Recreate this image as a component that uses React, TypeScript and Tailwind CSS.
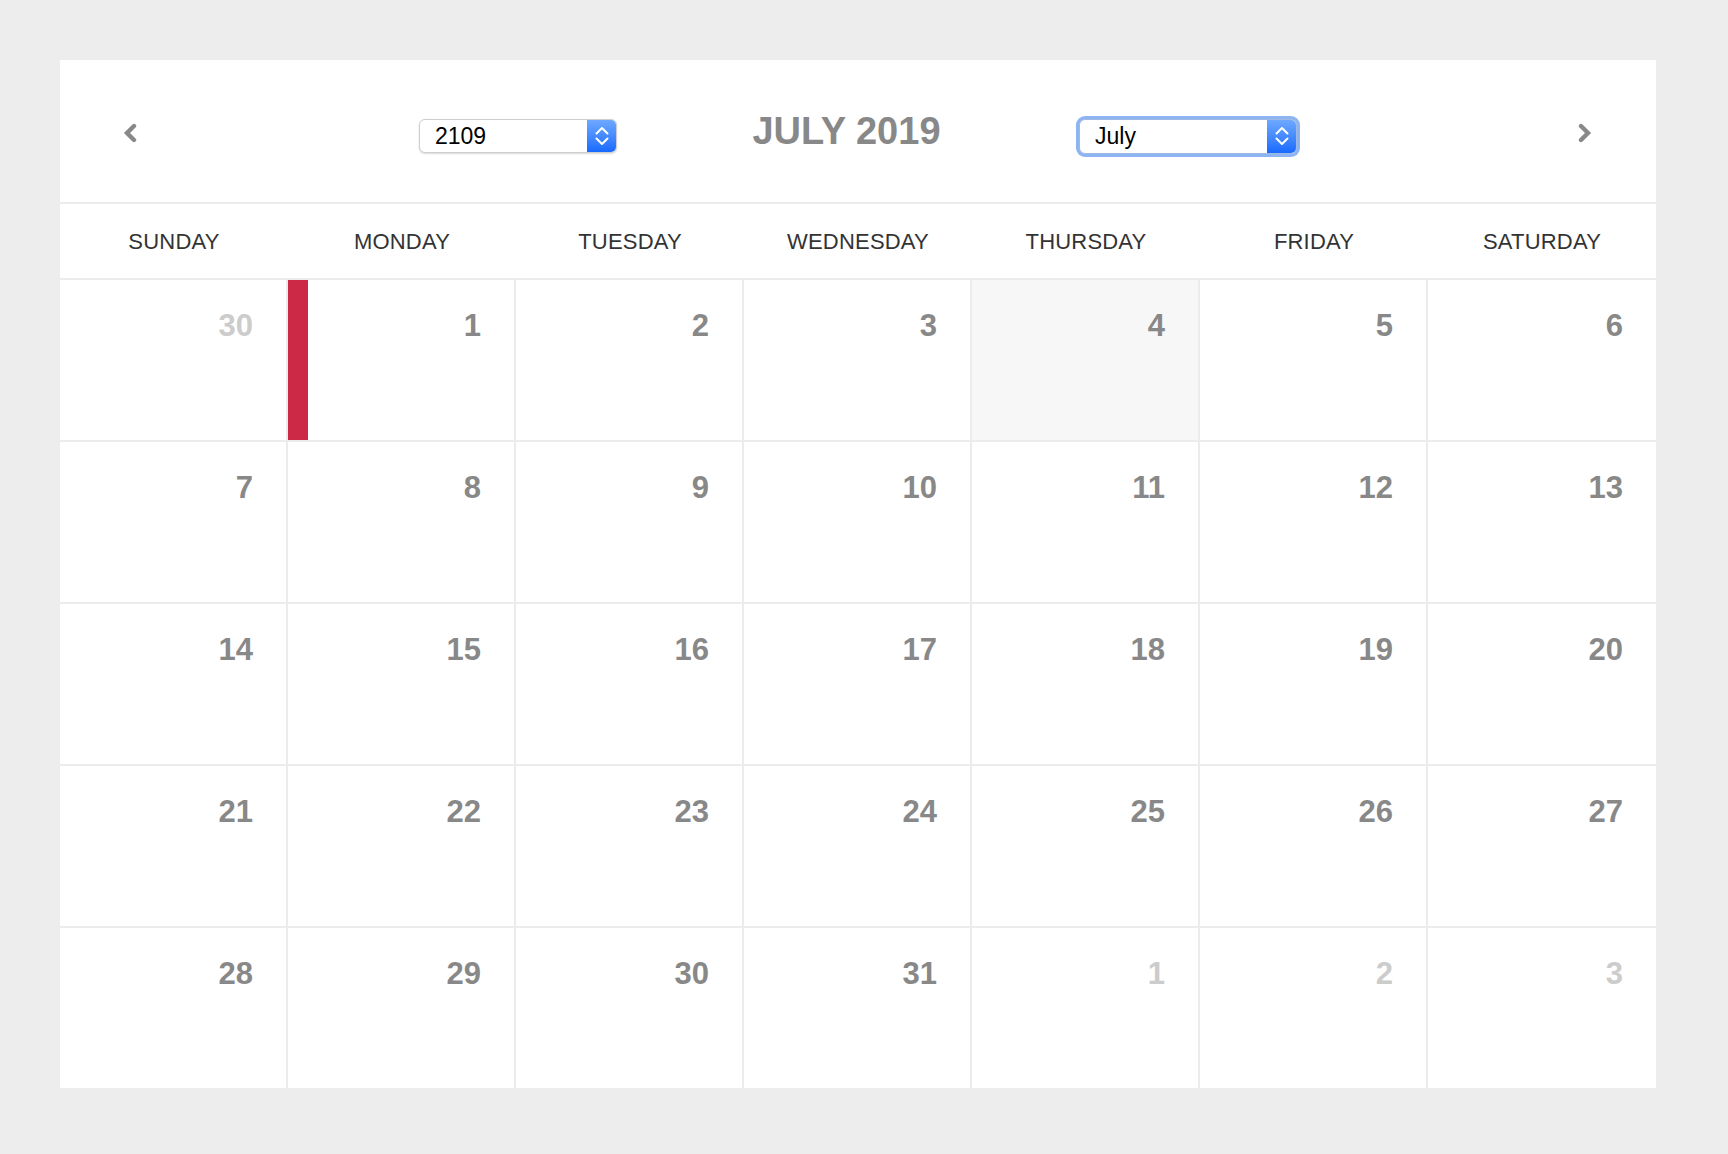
import React from 'react';

const weekdays = ['SUNDAY', 'MONDAY', 'TUESDAY', 'WEDNESDAY', 'THURSDAY', 'FRIDAY', 'SATURDAY'];

type Day = { n: number; muted?: boolean; today?: boolean; marked?: boolean };

const buildDays = (): Day[] => {
  const days: Day[] = [{ n: 30, muted: true }];
  for (let i = 1; i <= 31; i++) {
    days.push({ n: i, today: i === 4, marked: i === 1 });
  }
  [1, 2, 3].forEach((n) => days.push({ n, muted: true }));
  return days;
};

const Chevron = ({ dir }: { dir: 'left' | 'right' }) => (
  <svg width="14" height="22" viewBox="0 0 14 22" className="block">
    <polyline
      points={dir === 'left' ? '11,4 4,11 11,18' : '3,4 10,11 3,18'}
      fill="none"
      stroke="#888888"
      strokeWidth="4.4"
      strokeLinecap="round"
      strokeLinejoin="miter"
    />
  </svg>
);

const Stepper = ({ width }: { width: string }) => (
  <div className={`${width} h-full flex items-center justify-center rounded-r-[5px] bg-gradient-to-b from-[#6ea8ff] to-[#1769ff]`}>
    <svg width="16" height="24" viewBox="0 0 16 24">
      <polyline points="2.5,9.5 8,4 13.5,9.5" fill="none" stroke="#fff" strokeWidth="2" strokeLinecap="round" strokeLinejoin="round" />
      <polyline points="2.5,14.5 8,20 13.5,14.5" fill="none" stroke="#fff" strokeWidth="2" strokeLinecap="round" strokeLinejoin="round" />
    </svg>
  </div>
);

const App = () => {
  const days = buildDays();

  return (
    <div className="min-h-[1154px] bg-[#ededed] pt-[60px] px-[60px] font-['Liberation_Sans',Arial,sans-serif]">
      <div className="w-[1596px] bg-white">
        {/* header */}
        <div className="h-[144px] border-b-2 border-[#ececec] flex items-center">
          <button className="ml-[63px] mt-[4px]">
            <Chevron dir="left" />
          </button>
          <div className="ml-[282px] mt-[10px] w-[198px] h-[34px] flex rounded-[6px] border border-[#cfcfcf] shadow-[0_1px_2px_rgba(0,0,0,0.15)] bg-white">
            <span className="flex-1 pl-[15px] text-[23px] leading-[32px] text-black">2109</span>
            <Stepper width="w-[29px]" />
          </div>
          <div className="flex-1 text-center text-[38px] font-bold leading-none text-[#888888]">
            JULY 2019
          </div>
          <div className="mt-[10px] w-[224px] h-[41px] rounded-[9px] bg-[#8db5f3] p-[3px]">
            <div className="w-full h-full flex rounded-[6px] border border-[#9fb9e0] bg-white">
              <span className="flex-1 pl-[15px] text-[23px] leading-[32px] text-black">July</span>
              <Stepper width="w-[29px]" />
            </div>
          </div>
          <button className="ml-[278px] mr-[64px] mt-[4px]">
            <Chevron dir="right" />
          </button>
        </div>

        {/* weekday names */}
        <div className="grid grid-cols-7 h-[76px] border-b-2 border-[#ececec]">
          {weekdays.map((d) => (
            <div key={d} className="flex items-center justify-center pt-[1px] text-[22px] tracking-[0.2px] text-[#333333]">
              {d}
            </div>
          ))}
        </div>

        {/* days */}
        <div className="grid grid-cols-7">
          {days.map((day, i) => {
            const lastCol = i % 7 === 6;
            const lastRow = i >= 28;
            return (
              <div
                key={i}
                className={`relative pt-[31px] pr-[33px] text-right ${lastRow ? 'h-[160px]' : 'h-[162px] border-b-2'} ${lastCol ? '' : 'border-r-2'} border-[#ececec] ${day.today ? 'bg-[#f7f7f7]' : ''}`}
              >
                {day.marked && <div className="absolute left-0 top-0 bottom-0 w-[20px] bg-[#cb2945]" />}
                <span className={`text-[31px] font-bold leading-[30px] ${day.muted ? 'text-[#cccccc]' : 'text-[#888888]'}`}>
                  {day.n}
                </span>
              </div>
            );
          })}
        </div>
      </div>
    </div>
  );
};

export default App;
